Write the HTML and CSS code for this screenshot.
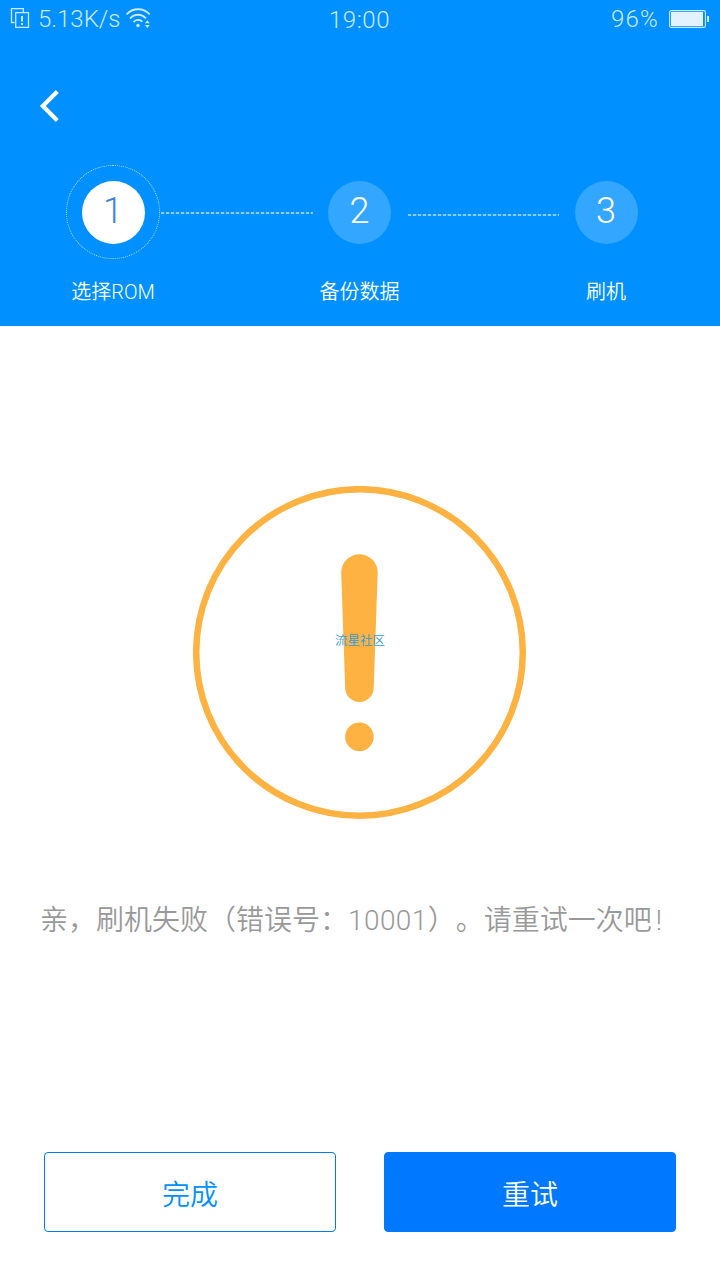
FILE: index.html
```html
<!DOCTYPE html>
<html lang="zh-CN">
<head>
<meta charset="UTF-8">
<meta name="viewport" content="width=device-width, initial-scale=1.0">
<title>刷机</title>
<link rel="stylesheet" href="styles.css">
</head>
<body>

<!-- Header -->
<header class="header">
  <div class="status-bar">
    <div class="status-left">
      <svg class="icon-copy" width="20" height="22" viewBox="0 0 20 22" fill="none" stroke="currentColor" stroke-width="1.3">
        <path d="M4.5 14.5H1.5V.7H13.3V4"/>
        <path d="M5.7 4.7H18.5V19.3H5.7Z"/>
        <path d="M12 8V13.5M12 15V17" stroke-width="2"/>
      </svg>
      <span class="net-speed">5.13K/s</span>
      <svg class="icon-wifi" width="26" height="22" viewBox="0 0 26 22" fill="none" stroke="currentColor" stroke-width="1.8">
        <path d="M.6 6.5C6.7 -.5 17.7 -.5 23.8 6.5"/>
        <path d="M4 10.5C8.5 5.5 15.5 5.5 20 10.5"/>
        <path d="M7.5 14.2C10 11.2 14 11.2 16.3 13.7"/>
        <circle cx="12" cy="17.5" r="1.7" fill="currentColor" stroke="none"/>
        <path d="M18.8 15.2L21.3 12.3L23.8 15.2ZM18.8 17L21.3 19.9L23.8 17Z" fill="currentColor" stroke="none"/>
      </svg>
    </div>
    <span class="clock">19:00</span>
    <div class="status-right">
      <span class="battery-level">96%</span>
      <svg class="icon-battery" width="40" height="18" viewBox="0 0 40 18">
        <rect x=".6" y=".6" width="35.8" height="16.8" rx="1.5" fill="none" stroke="currentColor" stroke-width="1.1"/>
        <rect x="2" y="2" width="32" height="14" fill="#e2f2ff"/>
        <rect x="38" y="6" width="2" height="6" fill="currentColor"/>
      </svg>
    </div>
  </div>

  <button class="back" type="button" aria-label="返回">
    <svg width="20" height="34" viewBox="0 0 20 34" fill="none" stroke="#fff" stroke-width="4.2">
      <path d="M18.3 2.5L3.8 17L18.3 31.5"/>
    </svg>
  </button>

  <div class="steps">
    <div class="step">
      <div class="ring ring-active">
        <span class="circle circle-active">1</span>
      </div>
      <span class="label">选择ROM</span>
    </div>
    <div class="line"></div>
    <div class="step">
      <div class="ring"><span class="circle">2</span></div>
      <span class="label">备份数据</span>
    </div>
    <div class="line line-second"></div>
    <div class="step">
      <div class="ring"><span class="circle">3</span></div>
      <span class="label">刷机</span>
    </div>
  </div>
</header>

<!-- Result -->
<main class="result">
  <div class="warning">
    <svg width="334" height="334" viewBox="0 0 334 334">
      <circle cx="166.5" cy="166.5" r="163.3" fill="none" stroke="#fdb242" stroke-width="6.5"/>
      <path d="M148.2 86.5A18.25 18.25 0 0 1 184.7 86.5L180.7 201.7A14.25 14.25 0 0 1 152.2 201.7Z" fill="#fdb242"/>
      <circle cx="166.4" cy="250.8" r="14.3" fill="#fdb242"/>
    </svg>
    <span class="watermark">流星社区</span>
  </div>
  <p class="message">亲，刷机失败（错误号：<span class="code">10001</span>）。请重试一次吧<span class="mark">!</span></p>
</main>

<!-- Buttons -->
<footer class="actions">
  <button class="btn btn-outline" type="button">完成</button>
  <button class="btn btn-solid" type="button">重试</button>
</footer>

</body>
</html>
```
FILE: styles.css
```css
* {
  box-sizing: border-box;
}

body {
  margin: 0;
  min-height: 1280px;
  display: flex;
  flex-direction: column;
  background-color: #fff;
  font-family: Roboto, "Noto Sans CJK SC", sans-serif;
  font-weight: 350;
  text-spacing-trim: space-all;
}

button {
  font-family: inherit;
  font-weight: inherit;
  cursor: pointer;
}

svg {
  display: block;
}

/* Header */
.header {
  height: 326px;
  background-color: #0090ff;
  color: #fff;
}

.status-bar {
  display: grid;
  grid-template-columns: 1fr auto 1fr;
  align-items: center;
  height: 36px;
  padding: 0 11px 0 10px;
  color: #cce9ff;
  font-size: 24px;
  line-height: 36px;
}

.status-left,
.status-right {
  display: flex;
  align-items: center;
  height: 36px;
}

.status-right {
  justify-content: flex-end;
}

.net-speed {
  margin: 0 5px 0 8px;
}

.clock {
  padding-top: 2px;
  letter-spacing: 0.6px;
}

.battery-level {
  margin-right: 10px;
  letter-spacing: 1.2px;
}

.back {
  display: block;
  margin: 53px 0 0 39px;
  padding: 0;
  border: 0;
  background: none;
}

/* Steps */
.steps {
  display: flex;
  align-items: flex-start;
  margin-top: 42px;
  padding: 0 67px 0 66px;
}

.step {
  display: flex;
  flex-direction: column;
  align-items: center;
  width: 94px;
}

.ring {
  display: flex;
  align-items: center;
  justify-content: center;
  width: 94px;
  height: 94px;
  border-radius: 50%;
}

.ring-active {
  border: 1px dotted #b5dfff;
}

.circle {
  width: 63px;
  height: 63px;
  border-radius: 50%;
  background-color: #33a6ff;
  font-size: 36px;
  font-weight: 300;
  line-height: 61px;
  text-align: center;
}

.circle-active {
  background-color: #fff;
  color: #3f83e0;
}

.label {
  margin-top: 18px;
  font-size: 20px;
  line-height: 30px;
  white-space: nowrap;
}

.line {
  flex: 1;
  height: 2px;
  margin-top: 47px;
  margin-left: 1px;
  background: repeating-linear-gradient(to right, #8ccbff 0 3px, #1a9bff 3px 5px);
}

.line-second {
  margin-top: 49px;
}

/* Result */
.result {
  flex: 1;
  padding: 160px 40px 0;
}

.warning {
  position: relative;
  width: 334px;
  margin: 0 auto;
}

.watermark {
  position: absolute;
  top: 146px;
  left: 0;
  width: 100%;
  color: #2d9cdf;
  font-size: 12.5px;
  line-height: 18px;
  text-align: center;
}

.message {
  margin: 80px 0 0;
  color: #999;
  font-size: 28px;
  line-height: 42px;
  white-space: nowrap;
}

.code {
  letter-spacing: 0.4px;
}

.mark {
  margin-left: 4px;
}

/* Buttons */
.actions {
  display: flex;
  gap: 48px;
  padding: 0 44px 48px;
}

.btn {
  flex: 1;
  height: 80px;
  padding-top: 3px;
  border: 1px solid #0078ff;
  border-radius: 4px;
  font-size: 28px;
}

.btn-outline {
  background-color: #fff;
  color: #0090ff;
}

.btn-solid {
  background-color: #0078ff;
  color: #fff;
}
```
